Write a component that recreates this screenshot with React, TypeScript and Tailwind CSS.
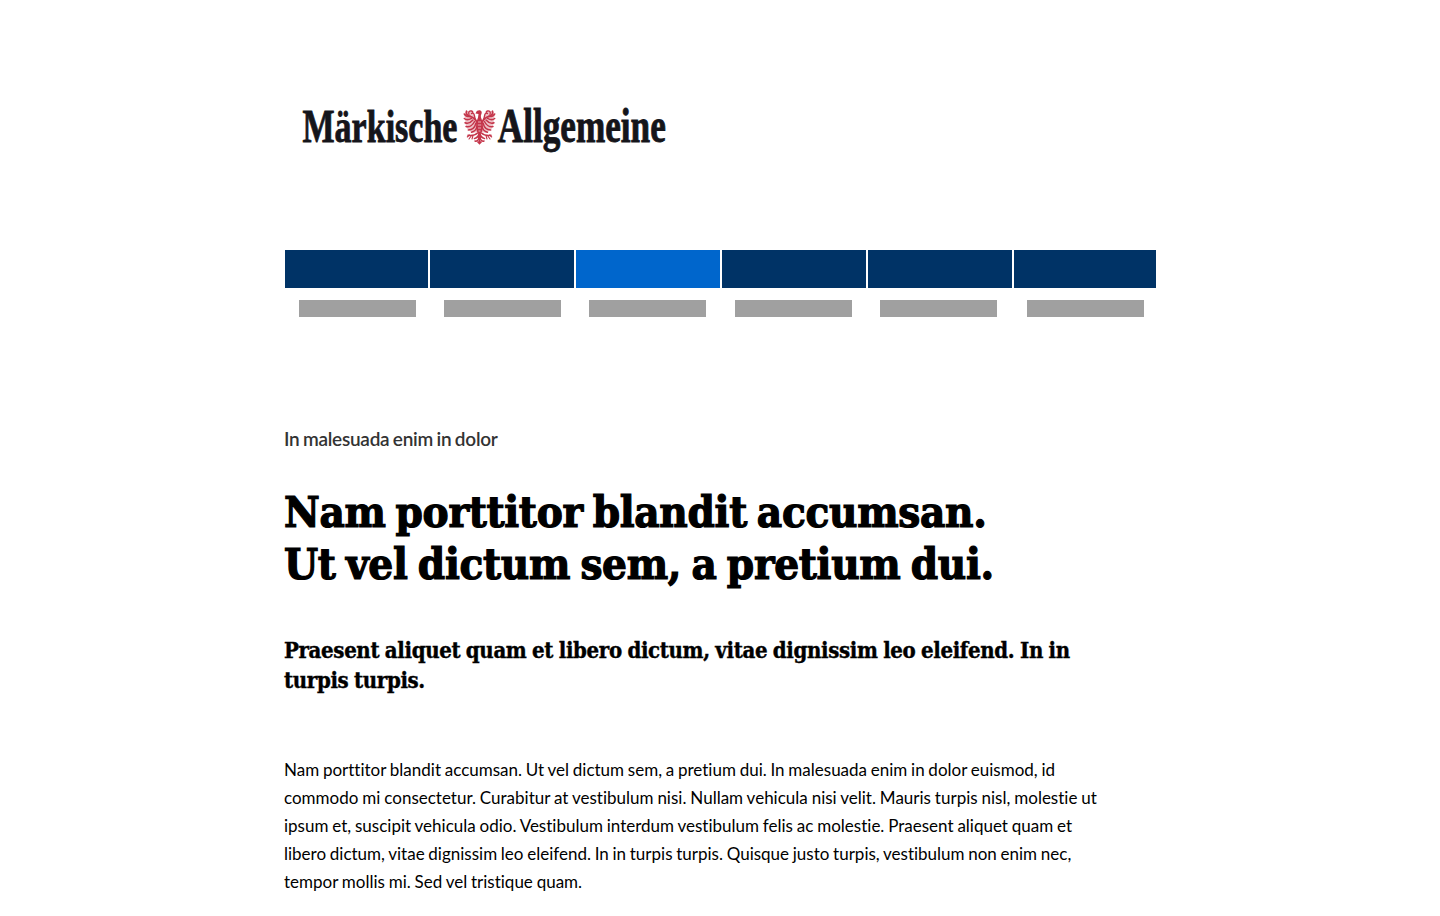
const tabs = [
  { width: "w-[143px]", offset: "ml-[14px]", color: "bg-[#003366]" },
  { width: "w-[144px]", offset: "ml-[14px]", color: "bg-[#003366]" },
  { width: "w-[144px]", offset: "ml-[13px]", color: "bg-[#0066cc]" },
  { width: "w-[144px]", offset: "ml-[13px]", color: "bg-[#003366]" },
  { width: "w-[144px]", offset: "ml-[12px]", color: "bg-[#003366]" },
  { width: "w-[142px]", offset: "ml-[13px]", color: "bg-[#003366]" },
];

function Wing() {
  return (
    <g fill="none" stroke="#c4354a" strokeLinecap="round">
      <path d="M3 2 L9 2 L11 8 L13.500 11 L14 23 L9 24 L4 20 L2 15 L1 6 Z" fill="#c4354a" fillOpacity=".3" stroke="none" />
      <path d="M13.500 13 C11 9 9 8 7 7.500 C4 7 2 4.500 3 2.300" strokeWidth="1.800" />
      <path d="M5.500 5.500 C4.500 3 6 1.500 8 2 C10 2.500 9.500 4.500 8 4.500" strokeWidth="1.300" />
      <path d="M12 10.500 C10.500 7.500 11.500 6 10 4.500" strokeWidth="1.400" />
      <path d="M7 7.500 C4 7.800 2 7 .8 5" strokeWidth="1.500" />
      <path d="M8 9.300 C5 11 2.500 11 .8 9.500" strokeWidth="1.500" />
      <path d="M9.500 11 C7 13.800 4 14.700 1.500 13.700" strokeWidth="1.500" />
      <path d="M11 12.500 C9.500 16 6 18.300 2.500 17.500" strokeWidth="1.500" />
      <path d="M12.500 14 C11.500 18 8.500 21 4.800 21" strokeWidth="1.500" />
      <path d="M13.500 17 C13 20.500 11 22.500 8 23.200" strokeWidth="1.500" />
      <path d="M14 24 C12 26 9 26.800 4.500 26.300" strokeWidth="1.500" />
      <path d="M8 26.500 L5.500 30 M9.500 26.500 L8.500 30 M6 26 L3.800 28" strokeWidth="1.100" />
      <path d="M15.500 25 C14.500 29 13 29 11 29.500 M15.500 28 C15 32 13 32.500 11.500 32" strokeWidth="1.500" />
    </g>
  );
}

function Logo() {
  return (
    <svg width="440" height="90" viewBox="284 80 440 90" role="img" aria-label="Märkische Allgemeine">
      <g fill="#15151a" stroke="#15151a" strokeWidth=".9" fontFamily="'Liberation Serif', serif" fontWeight="700" fontSize="47.5">
        <text transform="translate(302.500 141.600) scale(.7165 1)">Märkische</text>
        <text transform="translate(497.800 141.600) scale(.7405 1)">Allgemeine</text>
      </g>
      <g transform="translate(463.500 109)">
        <Wing />
        <g transform="translate(32 0) scale(-1 1)">
          <Wing />
        </g>
        <path d="M12.500 3.500 C13.300 .8 17.500 .4 18.200 3 C18.600 5 16.800 6 17.500 8.500 L19.500 14 L18.800 22 L16 27 L13.200 22 L12.500 14 L14.500 8.500 L15 5 L12 4.500 Z" fill="#c4354a" />
        <path d="M16 25 L16 33.500 M14 32.500 L16 34.500 L18 32.500" fill="none" stroke="#c4354a" strokeWidth="1.600" />
        <path d="M14.500 13 H17.500 M14.300 16 H17.700 M14.500 19 H17.500 M15 22 H17" stroke="#f3cdd2" strokeWidth=".8" />
      </g>
    </svg>
  );
}

export default function App() {
  return (
    <div className="h-[916px] overflow-hidden bg-white text-black">
      <main className="ml-[284px] w-[873px] pt-[80px] font-['Lato',sans-serif] [font-variant-ligatures:none]">
        <header className="h-[170px]">
          <Logo />
        </header>
        <nav className="flex gap-0.5 pl-px">
          {tabs.map((tab, i) => (
            <div key={i} className={`shrink-0 ${tab.width}`}>
              <div className={`h-[38px] ${tab.color}`} />
              <div className={`mt-3 h-[17px] w-[117px] bg-[#a0a0a0] ${tab.offset}`} />
            </div>
          ))}
        </nav>
        <article className="whitespace-nowrap pt-[108px]">
          <p className="text-[19px] leading-7 font-semibold tracking-[-0.26px] text-[#333333] [word-spacing:-1px]">In malesuada enim in dolor</p>
          <h1 className="mt-[33px] font-['DejaVu_Serif_Condensed','DejaVu_Serif',serif] text-[43.5px] leading-[52px] font-bold tracking-[-0.3px] [-webkit-text-stroke:1.2px_black]">
            <span className="block [word-spacing:-3.4px]">Nam porttitor blandit accumsan.</span>
            <span className="block [word-spacing:-3px]">Ut vel dictum sem, a pretium dui.</span>
          </h1>
          <h2 className="mt-[45px] font-['DejaVu_Serif_Condensed','DejaVu_Serif',serif] text-[22px] leading-[30px] font-bold tracking-[-0.35px] [-webkit-text-stroke:0.4px_black] [word-spacing:-0.9px]">
            <span className="block">Praesent aliquet quam et libero dictum, vitae dignissim leo eleifend. In in</span>
            <span className="block">turpis turpis.</span>
          </h2>
          <p className="mt-[61px] text-[17px] leading-7">
            <span className="block [word-spacing:-0.6px]">Nam porttitor blandit accumsan. Ut vel dictum sem, a pretium dui. In malesuada enim in dolor euismod, id</span>
            <span className="block [word-spacing:-0.42px]">commodo mi consectetur. Curabitur at vestibulum nisi. Nullam vehicula nisi velit. Mauris turpis nisl, molestie ut</span>
            <span className="block [word-spacing:-0.5px]">ipsum et, suscipit vehicula odio. Vestibulum interdum vestibulum felis ac molestie. Praesent aliquet quam et</span>
            <span className="block [word-spacing:-0.63px]">libero dictum, vitae dignissim leo eleifend. In in turpis turpis. Quisque justo turpis, vestibulum non enim nec,</span>
            <span className="block [word-spacing:-0.55px]">tempor mollis mi. Sed vel tristique quam.</span>
          </p>
        </article>
      </main>
    </div>
  );
}
